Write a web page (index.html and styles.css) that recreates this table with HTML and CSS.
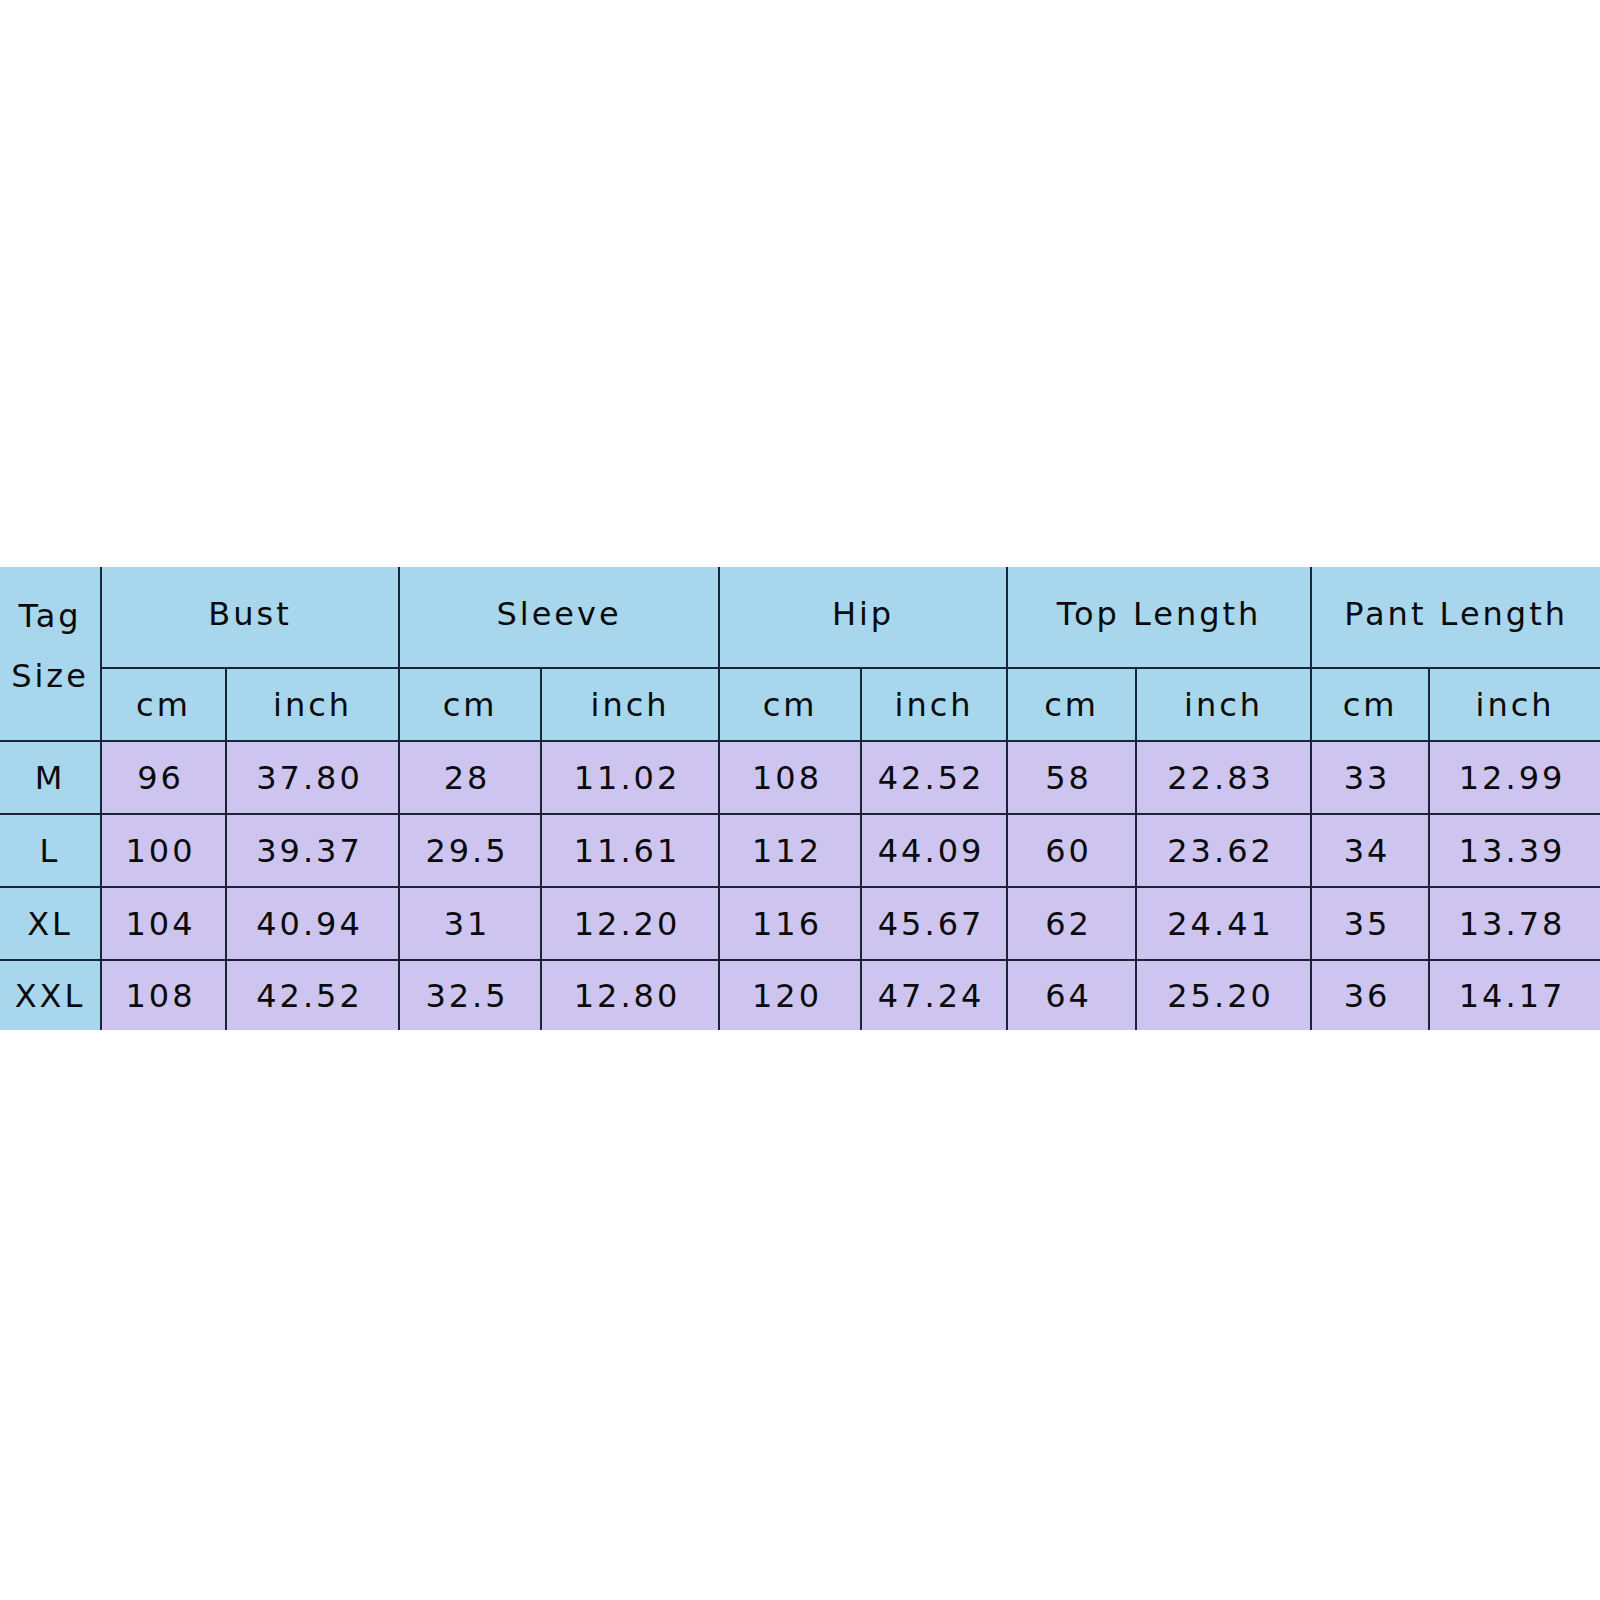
FILE: index.html
```html
<!DOCTYPE html>
<html>
<head>
<meta charset="utf-8">
<link rel="stylesheet" href="styles.css">
</head>
<body>
<div class="page">
<table class="chart">
  <colgroup>
    <col class="c0"><col class="c1"><col class="c2"><col class="c3"><col class="c4"><col class="c5"><col class="c6"><col class="c7"><col class="c8"><col class="c9"><col class="c10">
  </colgroup>
  <thead>
    <tr class="h1">
      <th rowspan="2" class="tag">Tag<br>Size</th>
      <th colspan="2">Bust</th>
      <th colspan="2">Sleeve</th>
      <th colspan="2">Hip</th>
      <th colspan="2">Top Length</th>
      <th colspan="2">Pant Length</th>
    </tr>
    <tr class="h2">
      <th>cm</th><th>inch</th>
      <th>cm</th><th>inch</th>
      <th>cm</th><th>inch</th>
      <th>cm</th><th>inch</th>
      <th>cm</th><th>inch</th>
    </tr>
  </thead>
  <tbody>
    <tr class="r">
      <th>M</th><td>96</td><td>37.80</td><td>28</td><td>11.02</td><td>108</td><td>42.52</td><td>58</td><td>22.83</td><td>33</td><td>12.99</td>
    </tr>
    <tr class="r">
      <th>L</th><td>100</td><td>39.37</td><td>29.5</td><td>11.61</td><td>112</td><td>44.09</td><td>60</td><td>23.62</td><td>34</td><td>13.39</td>
    </tr>
    <tr class="r">
      <th>XL</th><td>104</td><td>40.94</td><td>31</td><td>12.20</td><td>116</td><td>45.67</td><td>62</td><td>24.41</td><td>35</td><td>13.78</td>
    </tr>
    <tr class="r last">
      <th>XXL</th><td>108</td><td>42.52</td><td>32.5</td><td>12.80</td><td>120</td><td>47.24</td><td>64</td><td>25.20</td><td>36</td><td>14.17</td>
    </tr>
  </tbody>
</table>
</div>
</body>
</html>
```

FILE: styles.css
```css
html, body {
  margin: 0;
  padding: 0;
  background: #ffffff;
}
.page {
  width: 1600px;
  padding-top: 567px;
}
.chart {
  width: 1600px;
  table-layout: fixed;
  border-collapse: collapse;
  border-style: hidden;
  font-family: "DejaVu Sans", "Liberation Sans", sans-serif;
  font-size: 32px;
  letter-spacing: 3px;
  color: #0a0a0a;
}
.c0 { width: 101px; }
.c1 { width: 125px; }
.c2 { width: 173px; }
.c3 { width: 142px; }
.c4 { width: 178px; }
.c5 { width: 142px; }
.c6 { width: 146px; }
.c7 { width: 129px; }
.c8 { width: 175px; }
.c9 { width: 118px; }
.c10 { width: 171px; }
.chart th, .chart td {
  border: 2px solid #1b2436;
  padding: 0;
  text-align: center;
  vertical-align: middle;
  font-weight: normal;
  white-space: nowrap;
}
.chart thead th,
.chart tbody th {
  background: #a8d7ed;
}
.chart td {
  background: #cdc5f0;
  padding-right: 6px;
}
.h1 th { height: 94px; padding-bottom: 6px; }
.h2 th { height: 71px; }
.r th, .r td { height: 71px; }
.last th, .last td { height: 69px; }
.chart .tag {
  height: auto;
  line-height: 60px;
  padding-bottom: 16px;
}
```
